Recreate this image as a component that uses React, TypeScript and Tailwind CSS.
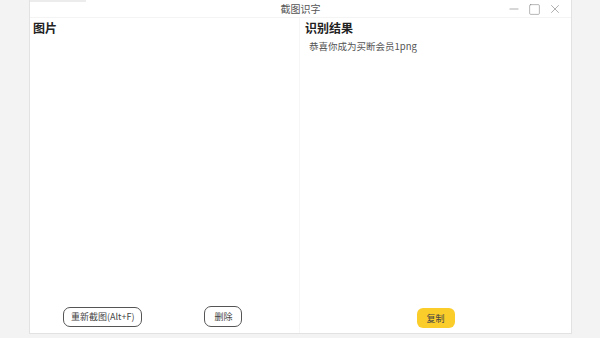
import { Minus, Square, X } from "lucide-react";

const sans = { fontFamily: '"Noto Sans CJK SC", "Noto Sans", sans-serif' };

export default function App() {
  return (
    <div className="w-[600px] h-[338px] bg-[#f3f3f3] flex overflow-hidden" style={sans}>
      <div className="ml-[29px] w-[543px] h-[334px] bg-white border-x border-b border-[#e2e2e2] flex flex-col">
        {/* title bar */}
        <div className="relative h-[18px] border-b border-[#f4f4f4] flex items-center justify-center shrink-0">
          <div className="absolute left-0 top-0 w-[56px] h-[2px] bg-[#ececec]" />
          <span className="text-[10px] leading-none text-[#555]">截图识字</span>
          <div className="absolute right-[9px] top-[2px] flex items-center gap-[7px] text-[#777]">
            <Minus size={14} strokeWidth={1} />
            <Square size={13} strokeWidth={1} />
            <X size={14} strokeWidth={1} />
          </div>
        </div>

        <div className="flex flex-1 min-h-0">
          {/* left panel */}
          <div className="w-[270px] flex flex-col border-r border-[#f6f6f6]">
            <div className="pl-[3px] pt-[2px] text-[12px] font-bold text-[#222] leading-[16px]">图片</div>
            <div className="flex-1" />
            <div className="flex items-center pl-[33px] gap-[62px] pb-[6px]">
              <button className="h-[20px] px-[7px] rounded-[7px] border border-[#555] text-[9px] text-[#444] leading-none">
                重新截图(Alt+F)
              </button>
              <button className="h-[21px] px-[9px] rounded-[7px] border border-[#555] text-[9px] text-[#444] leading-none">
                删除
              </button>
            </div>
          </div>

          {/* right panel */}
          <div className="flex-1 flex flex-col">
            <div className="pl-[5px] pt-[2px] text-[12px] font-bold text-[#222] leading-[16px]">识别结果</div>
            <div className="pl-[9px] pt-[4px] text-[9.5px] text-[#555] leading-[12px]">恭喜你成为买断会员1png</div>
            <div className="flex-1" />
            <div className="flex justify-center pb-[5px]">
              <button className="h-[20px] w-[38px] rounded-[6px] bg-[#fbcd2b] text-[9px] text-[#444] leading-none">
                复制
              </button>
            </div>
          </div>
        </div>
      </div>
    </div>
  );
}
